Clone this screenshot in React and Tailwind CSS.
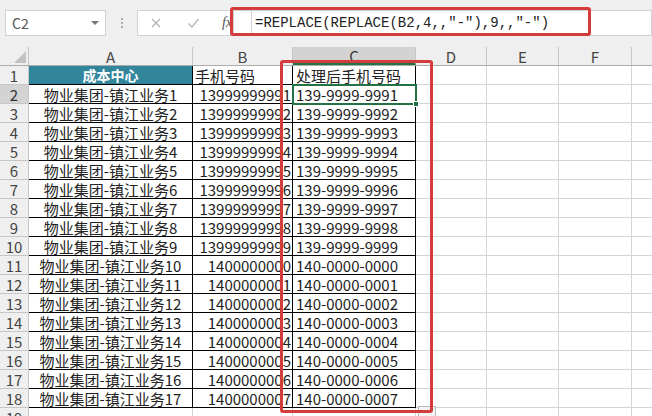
import React from 'react';

const COLS = [
  { key: 'A', w: 164 },
  { key: 'B', w: 100 },
  { key: 'C', w: 123 },
  { key: 'D', w: 71 },
  { key: 'E', w: 72 },
  { key: 'F', w: 73 },
  { key: '', w: 40 }
];

// build sheet rows
const rows = [{ a: '成本中心', b: '手机号码', c: '处理后手机号码', head: true }];
for (let i = 1; i <= 9; i++) {
  rows.push({ a: `物业集团-镇江业务${i}`, b: `1399999999${i}`, c: `139-9999-999${i}` });
}
for (let k = 0; k <= 7; k++) {
  rows.push({ a: `物业集团-镇江业务${10 + k}`, b: `140000000${k}`, c: `140-0000-000${k}` });
}
rows.push({ a: '', b: '', c: '', empty: true });

function Toolbar() {
  return (
    <div className="h-[47px] bg-[#efefef] flex items-start pt-[10px] pl-[5px]">
      <div className="w-[101px] h-[26px] bg-white border border-[#d2d2d2] flex items-center justify-between pl-[6px] pr-[6px]">
        <span className="text-[14px] text-[#555]">C2</span>
        <span className="w-0 h-0 border-l-[4px] border-r-[4px] border-t-[4px] border-l-transparent border-r-transparent border-t-[#777]" />
      </div>
      <div className="w-[31px] h-[26px] flex flex-col items-center justify-center gap-[2px]">
        <span className="w-[2px] h-[2px] bg-[#aaa]" />
        <span className="w-[2px] h-[2px] bg-[#aaa]" />
        <span className="w-[2px] h-[2px] bg-[#aaa]" />
      </div>
      <div className="w-[96px] h-[26px] bg-white border border-[#d2d2d2] border-r-0 flex items-center pl-[12px]">
        <svg width="12" height="12" viewBox="0 0 12 12" className="mr-[25px]">
          <path d="M2 2 L10 10 M10 2 L2 10" stroke="#b5b5b5" strokeWidth="1.3" fill="none" />
        </svg>
        <svg width="13" height="12" viewBox="0 0 13 12" className="mr-[22px]">
          <path d="M1.5 6.5 L5 10 L11.5 2" stroke="#b5b5b5" strokeWidth="1.3" fill="none" />
        </svg>
        <span className="text-[14px] italic font-['Liberation_Serif',serif] text-[#555]">fx</span>
      </div>
      <div className="flex-1 h-[26px] bg-white border border-[#d2d2d2] flex items-center">
        <div className="w-[18px] h-full border-r border-[#d2d2d2]" />
        <span className="pl-[3px] text-[14px] text-[#222] font-['Liberation_Mono','Noto_Sans_CJK_SC',monospace] whitespace-pre">
          =REPLACE(REPLACE(B2,4,,"-"),9,,"-")
        </span>
      </div>
    </div>
  );
}

function HeaderRow() {
  return (
    <div className="flex h-[19px] bg-[#efefef] border-b border-[#ababab]">
      <div className="w-[29px] shrink-0 border-r border-[#c6c6c6] relative">
        <svg width="12" height="12" className="absolute right-[2px] bottom-[2px]" viewBox="0 0 12 12">
          <polygon points="12,0 12,12 0,12" fill="#c3c3c3" />
        </svg>
      </div>
      {COLS.map((c, i) => (
        <div
          key={i}
          style={{ width: c.w }}
          className={
            c.key === 'C'
              ? 'shrink-0 bg-[#d3d3d3] border-r border-[#c6c6c6] border-b-2 border-b-[#217346] flex items-center justify-center text-[15px] text-[#333]'
              : 'shrink-0 border-r border-[#c6c6c6] flex items-center justify-center text-[15px] text-[#444]'
          }
        >
          {c.key}
        </div>
      ))}
    </div>
  );
}

function SheetRow({ row, idx }) {
  const n = idx + 1;
  const inTable = !row.empty;
  const line = inTable ? 'border-black' : 'border-[#d4d4d4]';
  return (
    <div className="flex h-[19px]">
      <div
        className={
          n === 2
            ? 'w-[29px] shrink-0 bg-[#d3d3d3] border-r border-b border-[#c6c6c6] flex items-center justify-center text-[15px] text-[#333]'
            : 'w-[29px] shrink-0 bg-[#efefef] border-r border-b border-[#c6c6c6] flex items-center justify-center text-[15px] text-[#444]'
        }
      >
        {n}
      </div>
      <div
        className={
          row.head
            ? 'w-[164px] shrink-0 bg-[#31869b] border-r border-b border-black flex items-center justify-center text-[14px] font-bold text-white'
            : `w-[164px] shrink-0 border-r border-b ${line} flex items-center justify-center text-[15px] text-[#222]`
        }
      >
        {row.a}
      </div>
      <div
        className={
          row.head
            ? 'w-[100px] shrink-0 border-r border-b border-black flex items-center pl-[2px] text-[15px] text-[#222]'
            : `w-[100px] shrink-0 border-r border-b ${line} flex items-center justify-end pr-[1px] text-[15px] text-[#222]`
        }
      >
        {row.b}
      </div>
      <div className={`w-[123px] shrink-0 border-r border-b ${line} flex items-center pl-[3px] text-[15px] text-[#222]`}>
        {row.c}
      </div>
      {COLS.slice(3).map((c, i) => (
        <div key={i} style={{ width: c.w }} className="shrink-0 border-r border-b border-[#d4d4d4]" />
      ))}
    </div>
  );
}

export default function App() {
  return (
    <div className="w-[652px] h-[416px] overflow-hidden bg-white relative font-['Noto_Sans_CJK_SC','Liberation_Sans',sans-serif] leading-none">
      <Toolbar />
      <HeaderRow />
      {rows.map((r, i) => (
        <SheetRow key={i} row={r} idx={i} />
      ))}

      {/* selected cell C2 */}
      <div className="absolute left-[292px] top-[84px] w-[125px] h-[21px] border-2 border-[#217346] pointer-events-none" />
      <div className="absolute left-[413px] top-[101px] w-[6px] h-[6px] bg-[#217346] border border-white" />

      {/* autofill options button */}
      <div className="absolute left-[418px] top-[406px] w-[18px] h-[14px] bg-[#f4f4f4] border border-[#b8b8b8]" />

      {/* red highlight boxes */}
      <div className="absolute left-[230px] top-[7px] w-[361px] h-[29px] border-[3px] border-[#d23c3c] rounded-[3px]" />
      <div className="absolute left-[280px] top-[60px] w-[153px] h-[353px] border-[3px] border-[#d23c3c] rounded-[3px]" />
    </div>
  );
}
